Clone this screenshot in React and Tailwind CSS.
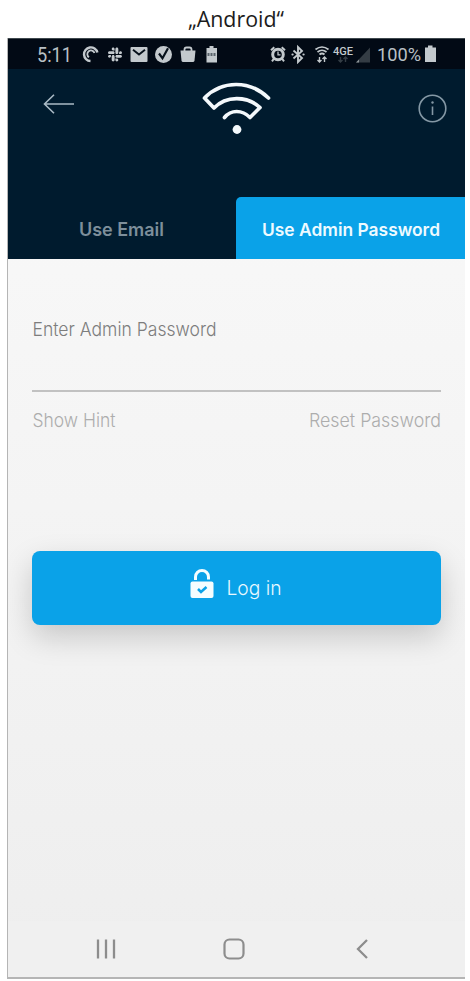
import React, { useState } from "react";
import { FaSlack } from "react-icons/fa";

const LeftStatusIcons = () => (
  <svg width="138" height="20" viewBox="81 44 138 20" fill="none">
    {/* podcast */}
    <path d="M90.5 61a6.8 6.8 0 1 1 6.9-8.500" stroke="#c3c9cd" strokeWidth="2.400" />
    <path d="M89 57.300a3.700 3.700 0 1 1 5.500-4.300" stroke="#c3c9cd" strokeWidth="1.800" />
    {/* slack */}
    <FaSlack x="107" y="46.500" size={16} color="#c3c9cd" />
    {/* mail */}
    <rect x="130.500" y="47" width="17" height="15" rx="1" fill="#c3c9cd" />
    <path d="m133 49.700 6 4.800 6-4.800" stroke="#07111b" strokeWidth="1.900" />
    {/* check */}
    <circle cx="163.500" cy="54.500" r="8.500" fill="#c3c9cd" />
    <path d="m159 53.500 3.500 4.800 5.500-10" stroke="#07111b" strokeWidth="2.200" />
    {/* bag */}
    <path d="M184.500 51v-1.500q0-2 2-2h3q2 0 2 2V51" stroke="#c3c9cd" strokeWidth="1.800" />
    <path d="M180.500 50.500h15l-1 10q-.2 1.500-1.700 1.500h-9.600q-1.500 0-1.700-1.500z" fill="#c3c9cd" />
    {/* battery */}
    <path d="M206.500 48h3v-2h4v2h3.500v14.500h-10.500z" fill="#c3c9cd" />
    <path d="M207.500 54.500h9" stroke="#5a646c" strokeWidth="3" strokeDasharray="2 1" />
  </svg>
);

const RightStatusIcons = () => (
  <svg width="102" height="20" viewBox="269 44 102 20" fill="none">
    {/* alarm */}
    <circle cx="278" cy="54.500" r="5.300" stroke="#c3c9cd" strokeWidth="3" />
    <path d="M278 51.500v3.400h2.500" stroke="#c3c9cd" strokeWidth="1.300" />
    <path d="M271 50.300l3.300-3M285 50.300l-3.300-3M274 58.500l-2 2.800M282 58.500l2 2.800" stroke="#c3c9cd" strokeWidth="2" />
    {/* bluetooth */}
    <path d="m293.500 50.500 8.500 7.500-4 4V47l4 4-8.500 7.500" stroke="#c3c9cd" strokeWidth="1.900" />
    <path d="M292.500 54.500h.1M303.500 54.500h.1" stroke="#c3c9cd" strokeWidth="2.200" strokeLinecap="round" />
    {/* wifi */}
    <path d="M315.500 49.500q6.500-5 13 0M317.500 52q4.500-3.500 9 0M319.500 54.500q2.500-2 5 0" stroke="#c3c9cd" strokeWidth="1.700" />
    <path d="M319.500 57v4.500M317.500 60l2 2 2-2M324.500 62v-4.500M322.500 59l2-2 2 2" stroke="#c3c9cd" strokeWidth="1.400" />
    {/* network */}
    <text x="333" y="55" fontSize="10" fontWeight="500" fontFamily="Roboto, sans-serif" textLength="20" lengthAdjust="spacingAndGlyphs" fill="#c3c9cd">4GE</text>
    <path d="M340.500 57v4.500M338.500 60l2 2 2-2M345.500 62v-4.500M343.500 59l2-2 2 2" stroke="#343d45" strokeWidth="1.400" />
    {/* signal */}
    <path d="M356 62.500 370 47.500v15z" fill="#343c44" />
    <path d="M356 62.500l3-3v3z" fill="#8d9498" />
  </svg>
);

const WifiLogo = () => (
  <svg width="70" height="54" viewBox="202 81 70 54" fill="none" stroke="#f4f9fc" strokeWidth="3.700" strokeLinecap="round" strokeLinejoin="round">
    <path d="M268.500 98C250 80 222 80 204.500 98L214 108C226 95.500 247 95.500 260 107.500L250 117.500C242 109.500 231 109.500 224.500 117.500" />
    <circle cx="237" cy="129.500" r="4.400" fill="#f4f9fc" stroke="none" />
  </svg>
);

const App = () => {
  const [tab, setTab] = useState("admin");

  return (
    <div className="w-[470px] h-[981px] overflow-hidden bg-white pl-[7px] pr-[5px] font-['Inter',sans-serif]">
      <h1 className="flex h-[38px] justify-center pt-[3px]">
        <svg width="98" height="34" className="overflow-visible">
          <text x="1" y="23.500" fontSize="21" fontFamily="Open Sans, sans-serif" textLength="96" lengthAdjust="spacingAndGlyphs" fill="#1c1c1c">„Android“</text>
        </svg>
      </h1>

      <div className="flex h-[941px] w-[458px] flex-col overflow-hidden border-b-2 border-l border-[#b5b5b5] bg-gradient-to-b from-[#fafafa] to-[#eeeeee]">
        <header className="flex h-[221px] shrink-0 flex-col bg-[#001b2e]">
          <div className="flex h-[31px] shrink-0 items-center border-t border-[#3f494e] bg-[#020a15] pl-[29px] font-['Roboto',sans-serif]">
            <svg width="37" height="28" className="overflow-visible">
              <text x="0" y="21.500" fontSize="19.500" textLength="35" lengthAdjust="spacingAndGlyphs" fill="#b9c0c5">5:11</text>
            </svg>
            <div className="ml-[7px]"><LeftStatusIcons /></div>
            <div className="ml-[50px]"><RightStatusIcons /></div>
            <svg width="66" height="28" className="ml-[6px] overflow-visible">
              <text x="0" y="21" fontSize="19" textLength="44" lengthAdjust="spacingAndGlyphs" fill="#b9c0c5">100%</text>
              <path d="M48 7.500h3V5.500h4.500v2H59v14.500H48z" fill="#c3c9cd" />
            </svg>
          </div>

          <div className="flex h-[128px] items-start justify-between pl-[35px] pr-[17px]">
            <button className="mt-[25px]" aria-label="Back">
              <svg width="32" height="20" viewBox="0 0 32 20" fill="none" stroke="#a9bac5" strokeWidth="1.600">
                <path d="M11 .8 1.500 10l9.500 9.200M1.500 10H31" />
              </svg>
            </button>
            <div className="ml-[30px] mt-[12px]"><WifiLogo /></div>
            <button className="mt-[25px] ml-[50px]" aria-label="Info">
              <svg width="30" height="30" viewBox="0 0 30 30" fill="none" stroke="#8498a5" strokeWidth="1.600">
                <circle cx="14.500" cy="14.500" r="13.300" />
                <path d="M14.500 12.500v8.500" />
                <circle cx="14.500" cy="8.500" r="1.200" fill="#8498a5" stroke="none" />
              </svg>
            </button>
          </div>

          <div className="flex flex-1">
            <button onClick={() => setTab("email")} className="flex w-[228px] items-center justify-center">
              <svg width="86" height="28" className="overflow-visible">
                <text x="0" y="21.500" fontSize="18" fontWeight="600" textLength="85" lengthAdjust="spacingAndGlyphs" fill="#7d8f9b">Use Email</text>
              </svg>
            </button>
            <button onClick={() => setTab("admin")} className={`flex flex-1 items-center justify-center ${tab === "admin" ? "rounded-tl-[5px] bg-[#0aa2e8]" : ""}`}>
              <svg width="182" height="28" className="overflow-visible">
                <text x="2" y="21.500" fontSize="17.500" fontWeight="600" textLength="178" lengthAdjust="spacingAndGlyphs" fill="#eefaff">Use Admin Password</text>
              </svg>
            </button>
          </div>
        </header>

        <main className="flex flex-1 flex-col px-[24px]">
          <div className="mt-[56px] h-[77px] border-b-2 border-[#c1c1c1]">
            <svg width="200" height="30" className="overflow-visible">
              <text x="0.500" y="20.500" fontSize="18.500" fontWeight="300" textLength="184" lengthAdjust="spacingAndGlyphs" fill="#7d7d7d">Enter Admin Password</text>
            </svg>
          </div>
          <div className="mt-[14px] flex h-[28px] justify-between">
            <svg width="88" height="28" className="overflow-visible">
              <text x="0.500" y="20.500" fontSize="18.500" fontWeight="300" textLength="83" lengthAdjust="spacingAndGlyphs" fill="#adadad">Show Hint</text>
            </svg>
            <svg width="134" height="28" className="overflow-visible">
              <text x="2" y="20.500" fontSize="18.500" fontWeight="300" textLength="132" lengthAdjust="spacingAndGlyphs" fill="#adadad">Reset Password</text>
            </svg>
          </div>

          <button className="mt-[117px] flex h-[74px] w-full items-center justify-center rounded-[8px] bg-[#0aa2e8] shadow-[0_12px_30px_rgba(0,0,0,0.18)]">
            <svg width="24" height="29" viewBox="0 0 24 29" fill="none" className="-mt-[9px]">
              <path d="M5.500 11V8a6.500 6.500 0 0 1 13 0v2.500" stroke="#f4fdff" strokeWidth="3" />
              <rect x="0.500" y="12.500" width="23" height="16.500" rx="2" fill="#f4fdff" />
              <path d="m8 20 3 3 5.500-5" stroke="#0aa2e8" strokeWidth="2.500" />
            </svg>
            <svg width="58" height="28" className="ml-[12px] overflow-visible">
              <text x="0.500" y="20.500" fontSize="19.500" fontWeight="300" textLength="55" lengthAdjust="spacingAndGlyphs" fill="#e8f8ff">Log in</text>
            </svg>
          </button>
        </main>

        <nav className="flex h-[56px] shrink-0 items-center bg-[#f0f0f0] pl-[88px]">
          <svg width="20" height="22" fill="none" stroke="#8d8d8d" strokeWidth="2.300">
            <path d="M2 1.500v19M10 1.500v19M18 1.500v19" />
          </svg>
          <svg width="22" height="22" className="ml-[107px]" fill="none" stroke="#8d8d8d" strokeWidth="2.200">
            <rect x="1.500" y="1.500" width="19" height="19" rx="5" />
          </svg>
          <svg width="12" height="20" className="ml-[111px]" fill="none" stroke="#8d8d8d" strokeWidth="2.300">
            <path d="M11 1 2 10l9 9" />
          </svg>
        </nav>
      </div>
    </div>
  );
};

export default App;
